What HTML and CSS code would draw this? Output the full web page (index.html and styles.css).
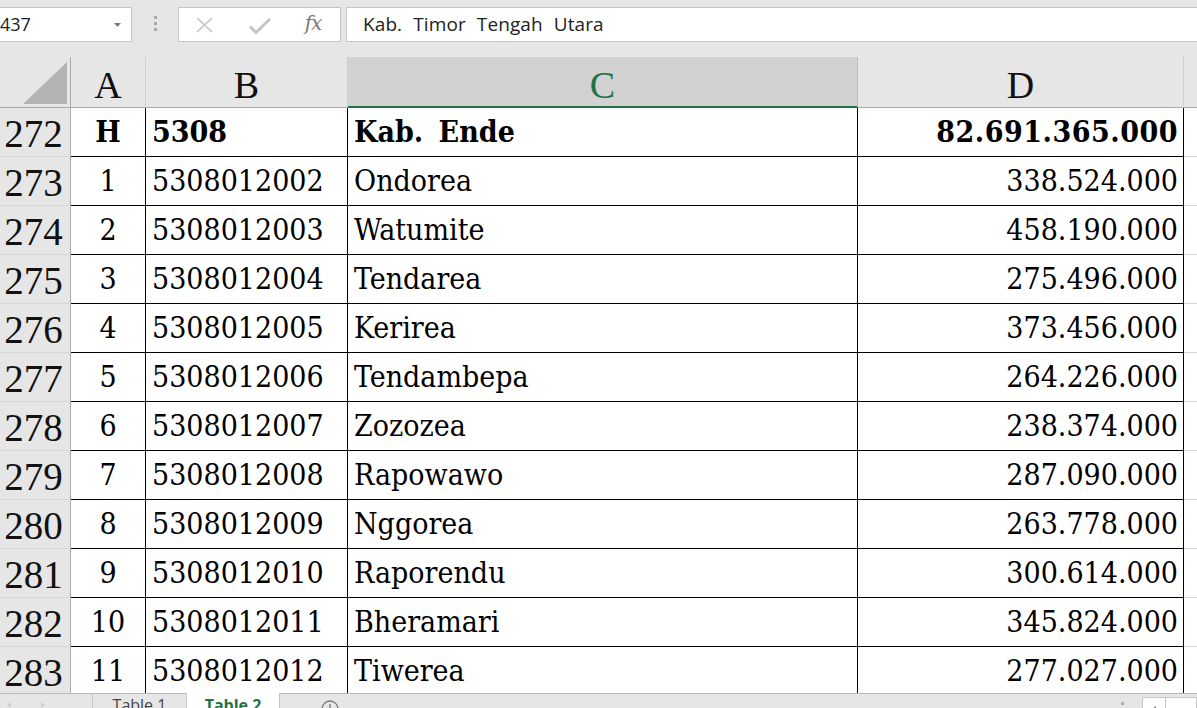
FILE: index.html
```html
<!DOCTYPE html>
<html>
<head>
<meta charset="utf-8">
<link rel="stylesheet" href="styles.css">
</head>
<body>
<div class="app">
  <div class="toolbar">
    <div class="namebox">
      <span class="ref">437</span>
      <svg class="caret" width="7" height="4" viewBox="0 0 7 4"><path d="M0 0h7L3.5 4z" fill="#7a7a7a"/></svg>
    </div>
    <div class="grip"><i></i><i></i><i></i></div>
    <div class="fbtns">
      <svg class="ico" width="22" height="22" viewBox="0 0 22 22"><path d="M3 4l15 14M18 4L3 18" stroke="#c4c4c4" stroke-width="1.6" fill="none"/></svg>
      <svg class="ico" width="22" height="22" viewBox="0 0 22 22"><path d="M1 12.5l6 6L21 5" stroke="#c4c4c4" stroke-width="3" fill="none"/></svg>
      <span class="fx">fx</span>
    </div>
    <div class="finput">Kab. Timor Tengah Utara</div>
  </div>

  <div class="sheet">
    <div class="corner"><svg width="71" height="50" viewBox="0 0 71 50"><path d="M67 5V47H23z" fill="#b4b4b4"/></svg></div>
    <div class="ch">A</div>
    <div class="ch">B</div>
    <div class="ch sel">C</div>
    <div class="ch">D</div>
    <div class="ch last"></div>

    <div class="rh">272</div><div class="c ca b">H</div><div class="c b">5308</div><div class="c b ws">Kab. Ende</div><div class="c cd b wide">82.691.365.000</div><div class="e"></div>
    <div class="rh">273</div><div class="c ca">1</div><div class="c">5308012002</div><div class="c">Ondorea</div><div class="c cd">338.524.000</div><div class="e"></div>
    <div class="rh">274</div><div class="c ca">2</div><div class="c">5308012003</div><div class="c">Watumite</div><div class="c cd">458.190.000</div><div class="e"></div>
    <div class="rh">275</div><div class="c ca">3</div><div class="c">5308012004</div><div class="c">Tendarea</div><div class="c cd">275.496.000</div><div class="e"></div>
    <div class="rh">276</div><div class="c ca">4</div><div class="c">5308012005</div><div class="c">Kerirea</div><div class="c cd">373.456.000</div><div class="e"></div>
    <div class="rh">277</div><div class="c ca">5</div><div class="c">5308012006</div><div class="c">Tendambepa</div><div class="c cd">264.226.000</div><div class="e"></div>
    <div class="rh">278</div><div class="c ca">6</div><div class="c">5308012007</div><div class="c">Zozozea</div><div class="c cd">238.374.000</div><div class="e"></div>
    <div class="rh">279</div><div class="c ca">7</div><div class="c">5308012008</div><div class="c">Rapowawo</div><div class="c cd">287.090.000</div><div class="e"></div>
    <div class="rh">280</div><div class="c ca">8</div><div class="c">5308012009</div><div class="c">Nggorea</div><div class="c cd">263.778.000</div><div class="e"></div>
    <div class="rh">281</div><div class="c ca">9</div><div class="c">5308012010</div><div class="c">Raporendu</div><div class="c cd">300.614.000</div><div class="e"></div>
    <div class="rh">282</div><div class="c ca">10</div><div class="c">5308012011</div><div class="c">Bheramari</div><div class="c cd">345.824.000</div><div class="e"></div>
    <div class="rh">283</div><div class="c ca">11</div><div class="c">5308012012</div><div class="c">Tiwerea</div><div class="c cd">277.027.000</div><div class="e"></div>
  </div>

  <div class="tabbar">
    <div class="nav">
      <svg width="8" height="8" viewBox="0 0 8 8"><path d="M6 1v6L2 4z" fill="#cfcfcf"/></svg>
      <svg width="8" height="8" viewBox="0 0 8 8"><path d="M2 1v6l4-3z" fill="#cfcfcf"/></svg>
    </div>
    <div class="tab">Table 1</div>
    <div class="tab active">Table 2</div>
    <div class="addsheet">
      <svg width="20" height="20" viewBox="0 0 20 20"><circle cx="10" cy="10" r="8" fill="none" stroke="#777" stroke-width="1.3"/><path d="M10 5v10M5 10h10" stroke="#777" stroke-width="1.3"/></svg>
    </div>
    <div class="spacer"></div>
    <div class="hdot"></div>
    <div class="sbtn"><svg width="8" height="8" viewBox="0 0 8 8"><path d="M6 1v6L2 4z" fill="#777"/></svg></div>
    <div class="sbar"></div>
  </div>
</div>
</body>
</html>
```

FILE: styles.css
```css
* { box-sizing: border-box; }
html, body { margin: 0; padding: 0; }
body {
  width: 1197px;
  height: 708px;
  overflow: hidden;
  background: #e6e6e6;
  font-family: "Open Sans", "Noto Sans", sans-serif;
}
.app { width: 1197px; height: 708px; overflow: hidden; display: flex; flex-direction: column; }

/* ---------- formula bar ---------- */
.toolbar {
  height: 57px;
  flex: none;
  display: flex;
  align-items: flex-start;
  padding-top: 7px;
  background: #e6e6e6;
}
.namebox {
  width: 132px;
  height: 35px;
  background: #fff;
  border: 1px solid #c6c6c6;
  border-left: none;
  display: flex;
  align-items: center;
  justify-content: space-between;
  padding: 0 10px 0 0;
}
.ref { font-size: 18px; color: #222; margin-top: -1px; }
.caret { margin-top: 1px; }
.grip {
  width: 46px;
  height: 35px;
  display: flex;
  flex-direction: column;
  align-items: center;
  padding-top: 9px;
  gap: 3px;
}
.grip i { display: block; width: 3px; height: 3px; background: #a9a9a9; }
.fbtns {
  width: 163px;
  height: 35px;
  background: #fff;
  border: 1px solid #c6c6c6;
  display: flex;
  align-items: center;
  padding-left: 15px;
  gap: 33px;
}
.ico { display: block; flex: none; }
.fx {
  width: 22px;
  font-family: "DejaVu Serif", "Liberation Serif", serif;
  font-style: italic;
  font-size: 20px;
  color: #7a7a7a;
  text-align: center;
  margin-top: -4px;
  margin-left: -2px;
  letter-spacing: -1px;
}
.finput {
  flex: 1;
  margin-left: 5px;
  height: 35px;
  background: #fff;
  border: 1px solid #c6c6c6;
  border-right: none;
  font-size: 19px;
  color: #222;
  line-height: 32px;
  padding-left: 16px;
  word-spacing: 6px;
  letter-spacing: 0.1px;
}

/* ---------- sheet grid ---------- */
.sheet {
  height: 636px;
  flex: none;
  overflow: hidden;
  display: grid;
  grid-template-columns: 71px 75px 202px 510px 326px 13px;
  grid-template-rows: 51px;
  grid-auto-rows: 49px;
  background: #fff;
}
.corner {
  background: #e6e6e6;
  border-right: 1px solid #ababab;
  border-bottom: 1px solid #ababab;
}
.corner svg { display: block; }
.ch {
  background: #e6e6e6;
  border-right: 1px solid #cfcfcf;
  border-bottom: 1px solid #ababab;
  font-family: "Liberation Serif", "Times New Roman", serif;
  font-size: 38px;
  color: #111;
  text-align: center;
  line-height: 50px;
  padding-top: 3px;
  overflow: hidden;
}
.ch.sel {
  background: #d2d2d2;
  color: #217346;
  border-right-color: #bdbdbd;
  border-bottom: 2px solid #217346;
}
.ch.last { border-right: none; }
.rh {
  background: #e6e6e6;
  border-right: 1px solid #ababab;
  border-bottom: 1px solid #d6d6d6;
  font-family: "Liberation Serif", "Times New Roman", serif;
  font-size: 39px;
  color: #111;
  text-align: center;
  line-height: 48px;
  padding: 2px 3px 0 0;
  overflow: hidden;
}
.c {
  border-right: 1px solid #000;
  border-bottom: 1px solid #000;
  font-family: "DejaVu Serif Condensed", "DejaVu Serif", serif;
  font-stretch: condensed;
  font-size: 30px;
  color: #000;
  line-height: 47px;
  padding: 0 6px;
  white-space: nowrap;
  overflow: hidden;
}
.c.ca { text-align: center; padding: 0; }
.c.cd { text-align: right; padding: 0 5px 0 0; }
.c.b { font-weight: bold; }
.c.ws { word-spacing: 6px; }
.c.wide { letter-spacing: 0.5px; }
.e { border-bottom: 1px solid #d4d4d4; }

/* ---------- sheet tabs ---------- */
.tabbar {
  height: 15px;
  flex: none;
  display: flex;
  align-items: flex-start;
  background: #e6e6e6;
  border-top: 1px solid #b9b9b9;
  font-size: 16px;
}
.nav {
  width: 93px;
  height: 14px;
  border-right: 1px solid #c6c6c6;
  display: flex;
  gap: 26px;
  padding: 7px 0 0 5px;
}
.nav svg { display: block; }
.tab {
  width: 93px;
  height: 20px;
  text-align: center;
  color: #444;
  line-height: 20px;
  padding-top: 1px;
}
.tab.active {
  width: 94px;
  margin-top: -1px;
  background: #fff;
  border-left: 1px solid #c6c6c6;
  border-right: 1px solid #c6c6c6;
  color: #217346;
  font-weight: bold;
  padding-top: 2px;
}
.addsheet { padding: 5px 0 0 40px; }
.addsheet svg { display: block; }
.spacer { flex: 1; }
.hdot { width: 3px; height: 3px; background: #b0b0b0; margin: 8px 18px 0 0; }
.sbtn {
  width: 24px;
  height: 20px;
  margin-top: 3px;
  background: #fff;
  border: 1px solid #c6c6c6;
  display: flex;
  justify-content: center;
  padding-top: 7px;
}
.sbar {
  width: 31px;
  height: 20px;
  margin-top: 3px;
  background: #fff;
  border: 1px solid #c6c6c6;
  border-left: none;
}
```
